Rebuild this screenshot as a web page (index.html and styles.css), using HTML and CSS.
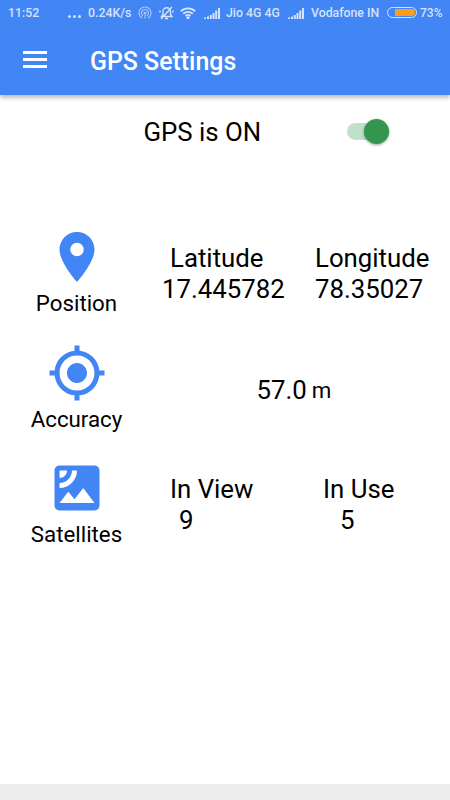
FILE: index.html
```html
<!DOCTYPE html>
<html lang="en">
<head>
    <meta charset="UTF-8">
    <meta name="viewport" content="width=device-width, initial-scale=1.0">
    <title>GPS Settings</title>
    <link rel="stylesheet" href="styles.css">
</head>
<body>
    <div class="status-bar">
        <span class="time">11:52</span>
        <span class="dots"><i></i><i></i><i></i></span>
        <span class="speed">0.24K/s</span>
        <svg class="hotspot" width="14" height="14" viewBox="0 0 14 14" fill="none" stroke="currentColor" stroke-width="1.1">
            <path d="M4.2 12.3a6 6 0 1 1 5.6 0M5 9.8a3.5 3.5 0 1 1 4 0"/>
            <circle cx="7" cy="7" r="1"/>
            <path d="M7 8.5v4"/>
        </svg>
        <svg class="bell" width="15" height="14" viewBox="0 0 15 14" fill="none" stroke="currentColor" stroke-width="1.4">
            <path d="M2.5 10.500h10.500l-1.500-2V5.500a3.700 3.700 0 0 0-7.500 0v3zM6 12.500h3M13 1L2 13M1 4.500v2M14 4.500v2"/>
        </svg>
        <svg class="wifi" width="16" height="12" viewBox="0 0 16 12" fill="none" stroke="currentColor" stroke-width="1.700">
            <path d="M.8 4.300a10.300 10.300 0 0 1 14.400 0M3.200 6.800a6.900 6.900 0 0 1 9.600 0M5.500 9.100a3.600 3.600 0 0 1 5 0"/>
            <circle cx="8" cy="10.800" r=".7"/>
        </svg>
        <svg class="signal" width="16" height="11" viewBox="0 0 16 11" fill="currentColor">
            <path d="M0 9.500h2V11H0zM3 8.500h2V11H3zM5.800 7h2v4h-2zM8.500 5h2v6h-2zM11.200 2.500h2V11h-2zM14 0h2v11h-2z"/>
        </svg>
        <span class="carrier-one">Jio 4G 4G</span>
        <svg class="signal" width="16" height="11" viewBox="0 0 16 11" fill="currentColor">
            <path d="M0 9.500h2V11H0zM3 8.500h2V11H3zM5.800 7h2v4h-2zM8.500 5h2v6h-2zM11.200 2.500h2V11h-2zM14 0h2v11h-2z"/>
        </svg>
        <span class="carrier-two">Vodafone IN</span>
        <span class="battery"><span class="battery-level"></span></span>
        <span class="percent">73%</span>
    </div>

    <header>
        <div class="menu-btn"><span></span><span></span><span></span></div>
        <h1>GPS Settings</h1>
    </header>

    <main>
        <div class="gps-switch">
            <span>GPS is ON</span>
            <div class="toggle"><div class="knob"></div></div>
        </div>

        <div class="row">
            <div class="label">
                <svg viewBox="0 0 24 24"><path d="M12 2C8.130 2 5 5.130 5 9c0 5.250 7 13 7 13s7-7.750 7-13c0-3.870-3.130-7-7-7zm0 9.700a2.700 2.700 0 1 1 0-5.400 2.700 2.700 0 0 1 0 5.400z"/></svg>
                <span>Position</span>
            </div>
            <div class="value latitude">
                <span class="name">Latitude</span>
                <span>17.445782</span>
            </div>
            <div class="value longitude">
                <span>Longitude</span>
                <span>78.35027</span>
            </div>
        </div>

        <div class="row">
            <div class="label">
                <svg viewBox="0 0 24 24"><path d="M12 8c-2.210 0-4 1.790-4 4s1.790 4 4 4 4-1.790 4-4-1.790-4-4-4zm8.940 3A8.994 8.994 0 0 0 13 3.060V1h-2v2.060A8.994 8.994 0 0 0 3.060 11H1v2h2.060A8.994 8.994 0 0 0 11 20.940V23h2v-2.060A8.994 8.994 0 0 0 20.940 13H23v-2h-2.060zM12 19c-3.870 0-7-3.130-7-7s3.130-7 7-7 7 3.130 7 7-3.130 7-7 7z"/></svg>
                <span>Accuracy</span>
            </div>
            <div class="accuracy"><span>57.0</span><small>m</small></div>
        </div>

        <div class="row">
            <div class="label">
                <svg viewBox="0 0 24 24"><path d="M19 3H5c-1.100 0-2 .9-2 2v14c0 1.100.9 2 2 2h14c1.100 0 2-.9 2-2V5c0-1.100-.9-2-2-2zM5 4.990h3C8 6.650 6.660 8 5 8V4.990zM5 12v-2c2.760 0 5-2.250 5-5.010h2C12 8.860 8.870 12 5 12zm0 6l3.500-4.500 2.500 3.010L14.500 12l4.500 6H5z"/></svg>
                <span>Satellites</span>
            </div>
            <div class="value in-view">
                <span>In View</span>
                <span class="count">9</span>
            </div>
            <div class="value in-use">
                <span>In Use</span>
                <span class="count">5</span>
            </div>
        </div>
    </main>

    <footer></footer>
</body>
</html>
```

FILE: styles.css
```css
* {
    box-sizing: border-box;
}
body {
    display: flex;
    flex-direction: column;
    height: 800px;
    margin: 0;
    font-family: Roboto, sans-serif;
    background-color: #fff;
    color: #000;
    overflow: hidden;
}
.status-bar {
    display: flex;
    align-items: center;
    height: 25px;
    padding-left: 8px;
    background-color: #4285f4;
    color: #d5e3fc;
    font-size: 12.3px;
    font-weight: 500;
    white-space: nowrap;
}
.status-bar > * {
    flex: none;
}
.time {
    width: 60px;
}
.dots {
    display: flex;
    gap: 2px;
    width: 20px;
    padding-top: 7px;
}
.dots i {
    width: 3px;
    height: 3px;
    border-radius: 50%;
    background-color: #d5e3fc;
}
.speed {
    width: 50px;
}
.hotspot {
    margin-right: 7px;
    opacity: 0.7;
}
.bell {
    margin-right: 6px;
}
.wifi {
    margin-right: 8px;
}
.signal {
    margin-top: 1px;
}
.carrier-one {
    width: 68px;
    padding-left: 6px;
}
.carrier-two {
    width: 82px;
    padding-left: 7px;
}
.battery {
    width: 30px;
    height: 11px;
    margin-left: 1px;
    padding: 1px 1px 1px 7px;
    border: 1px solid #d5e3fc;
    border-radius: 6px;
}
.battery-level {
    display: block;
    height: 7px;
    border-radius: 0 4px 4px 0;
    background-color: #ff9c1a;
}
.percent {
    margin-left: 3px;
    font-size: 12px;
}
header {
    display: flex;
    align-items: center;
    height: 70px;
    padding-left: 23px;
    background-color: #4285f4;
    color: #fff;
    box-shadow: 0 3px 4px rgba(0,0,0,0.25);
}
.menu-btn {
    display: flex;
    flex-direction: column;
    gap: 4px;
    width: 24px;
    margin: -1px 43px 0 0;
}
.menu-btn span {
    height: 3px;
    background-color: #fff;
}
h1 {
    margin: 2px 0 0;
    font-size: 24.9px;
    font-weight: 500;
}
main {
    flex: 1;
    font-size: 25.8px;
    line-height: 30.5px;
}
.gps-switch {
    display: flex;
    align-items: center;
    height: 73px;
    margin-bottom: 59px;
    padding-left: 143.5px;
}
.gps-switch span {
    width: 203px;
    padding-top: 2px;
}
.toggle {
    display: flex;
    align-items: center;
    justify-content: flex-end;
    width: 42px;
    height: 17px;
    border-radius: 9px;
    background-color: #c1e0cb;
}
.knob {
    width: 25px;
    height: 25px;
    border-radius: 50%;
    background-color: #34954f;
    box-shadow: 0 1px 3px rgba(0,0,0,0.4);
}
.row {
    display: grid;
    grid-template-columns: 153px 162px 135px;
    height: 115.5px;
}
.label {
    display: flex;
    flex-direction: column;
    align-items: center;
    font-size: 22.3px;
    line-height: 26px;
}
.label svg {
    width: 60px;
    height: 60px;
    margin-bottom: 3px;
    fill: #4285f4;
}
.value {
    display: flex;
    flex-direction: column;
    padding-top: 16.4px;
}
.latitude {
    padding-left: 9px;
}
.latitude .name {
    padding-left: 8px;
}
.in-view {
    padding-left: 17px;
}
.in-view .count {
    padding-left: 9px;
}
.in-use {
    padding-left: 8px;
}
.in-use .count {
    padding-left: 17px;
}
.accuracy {
    display: flex;
    grid-column: 2 / 4;
    gap: 5px;
    padding: 32px 0 0 103.5px;
}
.accuracy small {
    font-size: 22.3px;
}
footer {
    height: 16px;
    background-color: #ececec;
}
```
